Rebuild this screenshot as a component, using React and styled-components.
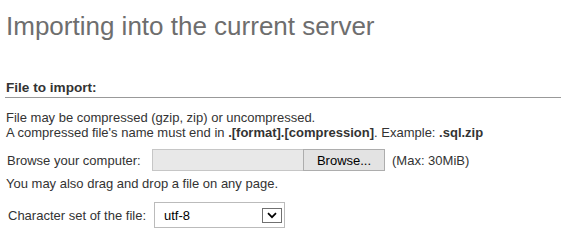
import React from "react";
import styled, { createGlobalStyle } from "styled-components";

const Global = createGlobalStyle`
  html, body { margin: 0; padding: 0; background: #fff; }
  body { font-family: "Liberation Sans", Arial, sans-serif; font-size: 13px; color: #000; }
`;

const Page = styled.div`
  padding: 0 0 0 6px;
  width: 555px;
`;

const Title = styled.h2`
  margin: 0;
  padding-top: 11px;
  font-weight: normal;
  font-size: 26px;
  line-height: 30px;
  color: #6e6e6e;
`;

const Section = styled.div`
  margin-top: 39px;
`;

const SectionHead = styled.h3`
  margin: 0 0 0 -1px;
  padding: 0 0 1px 1px;
  font-size: 13.6px;
  font-weight: bold;
  color: #333;
  border-bottom: 1px solid #999;
  line-height: 16px;
`;

const Para = styled.p`
  margin: 12px 0 0;
  line-height: 15px;
  color: #333;
`;

const Row = styled.div`
  display: flex;
  align-items: center;
  margin-top: ${(p) => p.$mt || 0}px;
  padding-left: ${(p) => p.$pl || 0}px;
  color: #333;
`;

const Label = styled.span`
  width: ${(p) => p.$w}px;
  flex: none;
  white-space: nowrap;
`;

const FileBox = styled.div`
  display: flex;
  height: 22px;
`;

const FileField = styled.div`
  width: 151px;
  box-sizing: border-box;
  background: #e8e8e8;
  border: 1px solid #c6c6c6;
  border-right: none;
`;

const BrowseButton = styled.div`
  width: 82px;
  box-sizing: border-box;
  display: flex;
  align-items: center;
  justify-content: center;
  background: #e3e3e3;
  border: 1px solid #adadad;
  color: #000;
`;

const Max = styled.span`
  margin-left: 7px;
`;

const Note = styled.div`
  margin-top: 5px;
  line-height: 15px;
  color: #333;
`;

const Select = styled.div`
  width: 131px;
  height: 26px;
  box-sizing: border-box;
  border: 1px solid #bbb;
  display: flex;
  align-items: center;
  justify-content: space-between;
  padding: 0 2px 0 9px;
  color: #000;
`;

const Arrow = styled.div`
  width: 20px;
  height: 15px;
  box-sizing: border-box;
  border: 1px solid #707070;
  display: flex;
  align-items: center;
  justify-content: center;
  background: #fff;
`;

export default function App() {
  return (
    <>
      <Global />
      <Page>
        <Title>Importing into the current server</Title>
        <Section>
          <SectionHead>File to import:</SectionHead>
          <Para>
            File may be compressed (gzip, zip) or uncompressed.
            <br />A compressed file's name must end in <b>.[format].[compression]</b>. Example: <b>.sql.zip</b>
          </Para>
          <Row $mt={9} $pl={1}>
            <Label $w={145}>Browse your computer:</Label>
            <FileBox>
              <FileField />
              <BrowseButton>Browse...</BrowseButton>
            </FileBox>
            <Max>(Max: 30MiB)</Max>
          </Row>
          <Note>You may also drag and drop a file on any page.</Note>
          <Row $mt={11} $pl={2}>
            <Label $w={146}>Character set of the file:</Label>
            <Select>
              <span>utf-8</span>
              <Arrow>
                <svg width="10" height="7" viewBox="0 0 10 7">
                  <path d="M1 1.2 L5 5.2 L9 1.2" fill="none" stroke="#000" strokeWidth="1.7" />
                </svg>
              </Arrow>
            </Select>
          </Row>
        </Section>
      </Page>
    </>
  );
}
